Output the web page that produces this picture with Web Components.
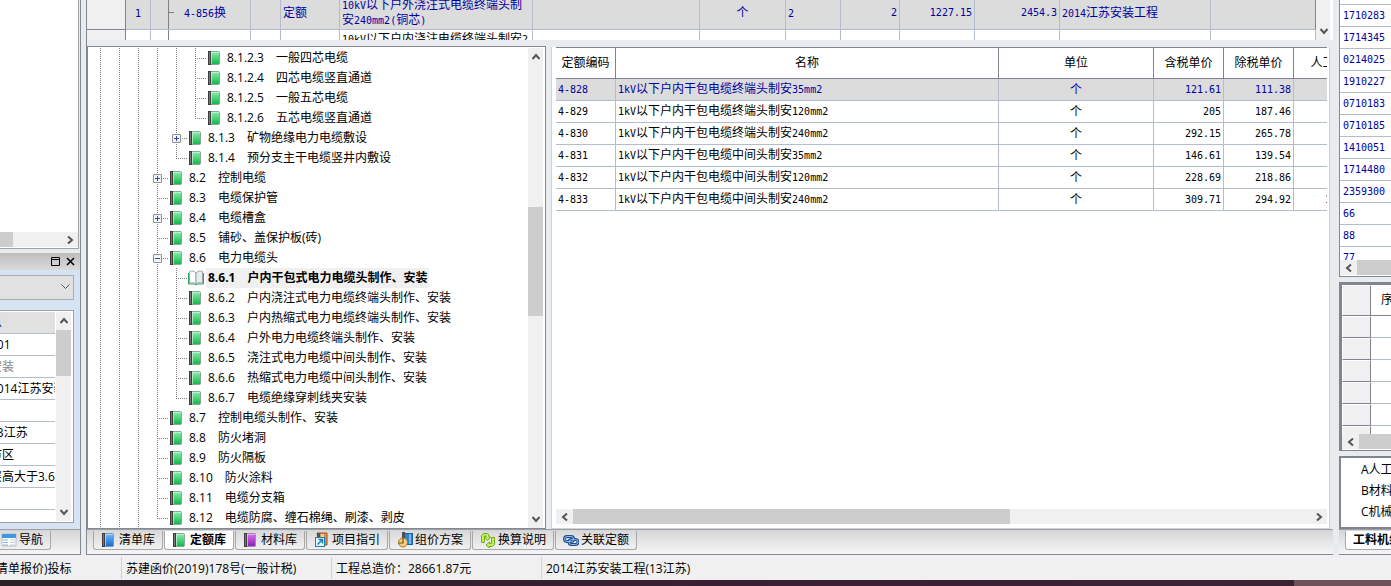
<!DOCTYPE html>
<html lang="zh-CN">
<head>
<meta charset="utf-8">
<title>工程造价</title>
<style>
html, body { margin: 0; height: 100%; }
body { overflow: hidden; background: #e8ecee; font: 12px/20px "Open Sans", "Noto Sans CJK SC", sans-serif; color: #000; }
</style>
</head>
<body>
<cost-app></cost-app>
<script>
const base = `*{box-sizing:border-box}button,select{font:inherit;color:inherit;border:0;background:none;padding:0;margin:0}`;
function define(name, html, setup) {
  const t = document.createElement('template');
  t.innerHTML = html.replace('<style>', '<style>' + base);
  customElements.define(name, class extends HTMLElement {
    constructor() { super(); this.attachShadow({ mode: 'open' }).append(t.content.cloneNode(true)); }
    connectedCallback() { if (setup && !this.ready) { this.ready = true; setup(this, this.shadowRoot); } }
  });
}
/* Latin runs of grid text are set in a half-width face beside the 12px ideographs */
const mix = s => s.replace(/[\x20-\x7e]+/g, m => `<span class="l">${m}</span>`);
const gridCss = `
:host{display:block;overflow:hidden;background:#fff;min-width:0}
table{border-collapse:separate;border-spacing:0;table-layout:fixed;width:100%;line-height:14px}
td,th{padding:0 2px;border-right:1px solid #b4bdce;border-bottom:1px solid #b4bdce;font-weight:400;overflow:hidden;white-space:nowrap;text-align:left}
.l,.n{font:10px/14px "DejaVu Sans Mono","Liberation Mono",monospace}
.n{text-align:right}.c{text-align:center}
.sel{background:#dcdcdc;color:#0000a0}
.g{background:#f0f0f0;border-color:#84828f}`;

/* ---- icons ---- */
const book = (a, b, c) => `<linearGradient id="g" x1="0" y1="0" x2="0" y2="1"><stop offset="0" stop-color="${a}"/><stop offset="1" stop-color="${b}"/></linearGradient>
<rect x="1.5" y="1.5" width="11" height="13" rx="1" fill="url(#g)" stroke="${c}"/><path d="M1 1h3v14H1z" fill="#3c3c3c"/><path d="M2 2h1v12H2z" fill="#777"/><path d="M4 2h1v12H4z" fill="#fff" opacity=".55"/><path d="M5 2h7v1H5z" fill="#fff" opacity=".4"/>`;
const icons = {
  green: book('#8cf0b0', '#12b548', '#8aa894'),
  blue: book('#74bdf4', '#1468cf', '#8298b0'),
  purple: book('#dd74f0', '#8c1db4', '#a08aa8'),
  open: `<path d="M1.500 1.500C4 .5 6.500 1 8 3v11C6 12.500 4 12.500 1.500 13z" fill="#fff" stroke="#9ba7a7"/><path d="M14.500 1.500C12 .5 9.500 1 8 3v11c2-1.500 4-1.500 6.500-1z" fill="#e3eeee" stroke="#9ba7a7"/><path d="M.5 3v11h6l1.500 1 1.500-1h6V3" fill="none" stroke="#2ea566"/>`,
  guide: `<path d="M3 1h10v12H5z" fill="#e58b45" stroke="#9c5220"/><path d="M3 1h3v6H3z" fill="#555"/><path d="M7 2h3v11H7z" fill="#f9d3a6"/><rect x="1.500" y="5.500" width="9" height="9" fill="#e8f7fd" stroke="#1583b8"/><path d="M3.500 12.500L8 8M4.500 7.500h4v4" fill="none" stroke="#1583b8" stroke-width="1.500"/>`,
  plan: `<rect x="7.500" y="1.500" width="8" height="11" fill="#2b83d6" stroke="#1c5da3"/><path d="M12 2h2v10h-2z" fill="#77b9ee"/><path d="M5 0h3v12H5z" fill="#4b4f55"/><circle cx="6" cy="10.500" r="4.500" fill="#f5cf85" stroke="#a9731f"/><path d="M6 5.500V11H1.500" fill="none" stroke="#7a5315" stroke-width="1.200"/>`,
  swap: `<g fill="#c5ec62" stroke="#6fae16"><path d="M1.500 10.500v-7l2-2h4l1.500 1.500V5h1.500L7.500 8.500 4.500 5H6V4H4.500v6.500z"/><path d="M14.500 5.500v7l-2 2H9.500V16L6 13l3.500-3v1.500h2v-6z"/></g>`,
  link: `<g fill="none" stroke="#1f4f93" stroke-width="3"><rect x="1.500" y="4.500" width="9" height="5" rx="2.500"/><rect x="6" y="7.500" width="9" height="5" rx="2.500"/></g><g fill="none" stroke="#8db9ea"><rect x="1.500" y="4.500" width="9" height="5" rx="2.500"/><rect x="6" y="7.500" width="9" height="5" rx="2.500"/></g>`,
  nav: `<path d="M1 2h14v12H1z" fill="#fff" stroke="#b7bcc2"/><path d="M1 2h14v4H1z" fill="#3f97de"/><path d="M2 8h5M2 10.500h5M2 13h5" stroke="#84b6e4"/><path d="M9 8h5M9 10.500h5M9 13h5" stroke="#c8ccd0"/>`
};
define('app-icon', `<style>:host{display:block;width:16px;height:16px;flex:none}svg{display:block}</style><svg width="16" height="16" viewBox="0 0 16 16" aria-hidden="true"></svg>`,
  (el, r) => { r.querySelector('svg').innerHTML = icons[el.getAttribute('name')]; });

/* ---- scroll bar: parts = "before,thumb,after" shares of the track ---- */
define('scroll-bar', `<style>
:host{display:flex;flex:none;background:#f0f0f0;height:15px}
:host([vertical]){flex-direction:column;width:15px;height:auto}
button{flex:none;width:17px;height:15px;display:grid;place-items:center}
:host([vertical]) button{width:15px;height:18px}
:host([vertical]) svg{transform:rotate(90deg)}
i{flex:1 1 0;min-width:0;min-height:0}.t{background:#cdcdcd}
:host([flat]) .s,:host([open]) .e{display:none}
</style><button class="s" aria-label="后退"><svg width="8" height="8"><path d="M6 .5L2 4l4 3.500" fill="none" stroke="#555" stroke-width="2"/></svg></button><i></i><i class="t"></i><i></i><button class="e" aria-label="前进"><svg width="8" height="8"><path d="M2 .5L6 4 2 7.500" fill="none" stroke="#555" stroke-width="2"/></svg></button>`,
  (el, r) => { const p = el.getAttribute('parts').split(','); r.querySelectorAll('i').forEach((x, k) => x.style.flexGrow = p[k]); });

/* ---- tabs ---- */
define('tab-strip', `<style>
:host{display:flex;flex:none;height:25px;border-top:1px solid #9b9ea5;background:linear-gradient(#d5d5d5,#f6f6f6);padding:1px 6px 0;overflow:hidden}
</style><slot></slot>`);
define('tab-item', `<style>
:host{display:block;flex:none;margin-right:1px}
button{display:flex;align-items:center;gap:2px;height:19px;padding:0 7px;border:1px solid #a9a9ab;border-top:0;border-radius:0 0 3px 3px;background:linear-gradient(#d9d9d9,#f1f1f1);line-height:18px;white-space:nowrap}
:host([active]) button{background:#fff;font-weight:700}
</style><button role="tab"><slot name="icon"></slot><slot></slot></button>`);

/* ---- tree ---- */
define('tree-row', `<style>
:host{display:flex;height:20px;white-space:nowrap}
.v{flex:none;width:19px;position:relative}
.v::before{content:"";position:absolute;left:9px;top:0;bottom:0;width:1px;background:repeating-linear-gradient(#808080 0 1px,#fff 1px 2px)}
.end::before{bottom:10px}
.j::after{content:"";position:absolute;left:9px;top:10px;width:11px;height:1px;background:repeating-linear-gradient(90deg,#808080 0 1px,#fff 1px 2px)}
button{position:absolute;z-index:1;left:5px;top:6px;width:9px;height:9px;border:1px solid #919191;border-radius:1px;background:#f5f6f8;display:block}
svg{display:block}
app-icon{margin:2px 2px 0}
.t{display:flex;gap:12px;padding:0 2px}
:host([current]) .t{background:#f0f0f0;font-weight:700}
</style>`, (el, r) => {
  const [lv, code, name, flag] = el.data;
  let h = '';
  for (let k = 0; k < lv; k++) h += '<span class="v"></span>';
  const box = /[+-]/.test(flag || '') ? `<button aria-label="${flag === '+' ? '展开' : '折叠'}"><svg width="7" height="7"><path d="M1 3.500h5${flag === '+' ? 'M3.500 1v5' : ''}" stroke="#2a4aa0"/></svg></button>` : '';
  h += `<span class="v j ${flag === 'end' ? 'end' : ''}">${box}</span>`;
  h += `<app-icon name="${flag === 'cur' ? 'open' : 'green'}"></app-icon><span class="t"><span>${code}</span><span>${name}</span></span>`;
  if (flag === 'cur') el.setAttribute('current', '');
  el.setAttribute('role', 'treeitem');
  r.append(document.createRange().createContextualFragment(h));
});
const nodes = [
  [5, '8.1.2.3', '一般四芯电缆'], [5, '8.1.2.4', '四芯电缆竖直通道'], [5, '8.1.2.5', '一般五芯电缆'], [5, '8.1.2.6', '五芯电缆竖直通道', 'end'],
  [4, '8.1.3', '矿物绝缘电力电缆敷设', '+'], [4, '8.1.4', '预分支主干电缆竖井内敷设', 'end'],
  [3, '8.2', '控制电缆', '+'], [3, '8.3', '电缆保护管'], [3, '8.4', '电缆槽盒', '+'], [3, '8.5', '铺砂、盖保护板(砖)'], [3, '8.6', '电力电缆头', '-'],
  [4, '8.6.1', '户内干包式电力电缆头制作、安装', 'cur'], [4, '8.6.2', '户内浇注式电力电缆终端头制作、安装'], [4, '8.6.3', '户内热缩式电力电缆终端头制作、安装'],
  [4, '8.6.4', '户外电力电缆终端头制作、安装'], [4, '8.6.5', '浇注式电力电缆中间头制作、安装'], [4, '8.6.6', '热缩式电力电缆中间头制作、安装'], [4, '8.6.7', '电缆绝缘穿刺线夹安装', 'end'],
  [3, '8.7', '控制电缆头制作、安装'], [3, '8.8', '防火堵洞'], [3, '8.9', '防火隔板'], [3, '8.10', '防火涂料'], [3, '8.11', '电缆分支箱'], [3, '8.12', '电缆防腐、缠石棉绳、刷漆、剥皮', 'end']];
define('quota-tree', `<style>
:host{display:flex;flex:none;width:459px;border:1px solid #848892;background:#fff;padding:1px 2px 0 0;overflow:hidden}
.rows{flex:1;min-width:0;padding-left:3px}
</style><div class="rows" role="tree"></div><scroll-bar vertical parts="142,109,195"></scroll-bar>`, (el, r) => {
  const box = r.querySelector('.rows');
  nodes.forEach(n => { const e = document.createElement('tree-row'); e.data = n; box.append(e); });
});

/* ---- bill lines ---- */
define('bill-grid', `<style>${gridCss}
:host{display:flex;flex:none;height:40px;padding-right:3px}
.clip{flex:1;min-width:0;height:40px;overflow:hidden;display:flex;align-items:flex-start}
table{margin-top:-5px}
tr{height:35px}
.sel td{padding-top:2px}
.w{white-space:normal}
.tr{padding-left:33px;background:linear-gradient(#808080,#808080) 17px 0/1px 100% no-repeat}
.tick{background:linear-gradient(#808080,#808080) 17px 0/1px 100% no-repeat,linear-gradient(#808080,#808080) 17px 17px/6px 1px no-repeat}
.top{vertical-align:top;padding-top:2px;white-space:nowrap}
.last{border-right-color:#84828f}
scroll-bar{width:14px}
</style><div class="clip"><table><colgroup><col style="width:39px"><col style="width:25px"><col style="width:100px"><col style="width:30px"><col style="width:59px"><col style="width:193px"><col><col style="width:86px"><col style="width:55px"><col style="width:59px"><col style="width:75px"><col style="width:85px"><col style="width:151px"><col style="width:105px"></colgroup><tbody></tbody></table></div><scroll-bar vertical flat parts="1,0,0"></scroll-bar>`, (el, r) => {
  r.querySelector('tbody').innerHTML = `<tr class="sel"><td class="g"></td><td class="c">${mix('1')}</td><td class="tr tick">${mix('4-856换')}</td><td></td><td>定额</td><td class="w">${mix('10kV以下户外浇注式电缆终端头制安240mm2(铜芯)')}</td><td></td><td class="c">个</td><td>${mix('2')}</td><td class="n">2</td><td class="n">1227.15</td><td class="n">2454.3</td><td>${mix('2014江苏安装工程')}</td><td class="last"></td></tr>
<tr><td class="g"></td><td></td><td class="tr"></td><td></td><td></td><td class="top">${mix('10kV以下户内浇注电缆终端头制安2')}</td>${'<td></td>'.repeat(8)}</tr>`;
});

/* ---- quota lines ---- */
define('quota-grid', `<style>${gridCss}
:host{display:flex;flex:1;flex-direction:column;border:1px solid #cfd2d6;border-top:0;padding:0 2px 4px 4px}
.clip{flex:1;min-height:0;overflow:hidden}
table{width:calc(100% + 37px)}
th{height:32px;text-align:center;border-color:#84828f;border-top:1px solid #84828f}
td{height:22px}
</style><div class="clip"><table><colgroup><col style="width:60px"><col><col style="width:155px"><col style="width:70px"><col style="width:70px"><col style="width:70px"></colgroup><thead><tr><th>定额编码</th><th>名称</th><th>单位</th><th>含税单价</th><th>除税单价</th><th>人工费</th></tr></thead><tbody></tbody></table></div><scroll-bar parts="0,437,300"></scroll-bar>`, (el, r) => {
  const rows = [['4-828', '终端头制安35', '121.61', '111.38'], ['4-829', '终端头制安120', '205', '187.46'], ['4-830', '终端头制安240', '292.15', '265.78'], ['4-831', '中间头制安35', '146.61', '139.54'], ['4-832', '中间头制安120', '228.69', '218.86'], ['4-833', '中间头制安240', '309.71', '294.92', '103.74']];
  r.querySelector('tbody').innerHTML = rows.map((x, k) => `<tr class="${k ? '' : 'sel'}"><td>${mix(x[0])}</td><td>${mix('1kV以下户内干包电缆' + x[1] + 'mm2')}</td><td class="c">个</td><td class="n">${x[2]}</td><td class="n">${x[3]}</td><td class="n">${x[4] || ''}</td></tr>`).join('');
});

/* ---- left column ---- */
define('nav-side', `<style>
:host{display:flex;flex-direction:column;flex:none;width:81px;border-right:1px solid #848892;border-bottom:1px solid #848892;background:#e8ecee;overflow:hidden}
.a{flex:none;height:249px;display:flex;flex-direction:column;justify-content:flex-end;background:#fff;border:solid #a0a3a8;border-width:0 1px 1px 0;margin-right:1px;padding-bottom:1px}
header{flex:none;height:17px;margin-top:4px;background:linear-gradient(#bdbdbd,#dadada);display:flex;justify-content:flex-end;align-items:center;gap:4px;padding-right:4px}
header button{width:11px;height:11px}svg{display:block}
.b{flex:1;min-height:0;background:#d5e3f3;display:flex;flex-direction:column;padding:5px 6px 6px 0;gap:10px}
.combo{flex:none;height:25px;position:relative}
select{appearance:none;width:100%;height:25px;background:#e1e1e1;border:1px solid #adadad;border-left:0}
.combo svg{position:absolute;right:4px;top:9px;pointer-events:none}
.p{flex:1;min-height:0;display:flex;background:#fff;border:1px solid #a0a0a0;border-left:0;padding:1px 2px 1px 0}
.q{flex:1;min-width:0;overflow:hidden;margin-right:1px}
table{border-collapse:separate;border-spacing:0;table-layout:fixed;width:calc(100% + 10px);margin-left:-10px}
td{height:22px;border-bottom:1px solid #b4bdce;white-space:nowrap;overflow:hidden;padding:0;line-height:20px}
.h td{background:#e1e1e1;color:#0a3b8c}.d td{color:#888}
tab-strip{padding-left:0}tab-item{margin-left:-7px}
</style><div class="a"><scroll-bar flat parts="13,0,48"></scroll-bar></div>
<header><button aria-label="最大化"><svg width="11" height="11"><path d="M1.500 1.500h8v8h-8zM1 3.500h9" fill="none" stroke="#000"/></svg></button><button aria-label="关闭"><svg width="11" height="11"><path d="M2 2l7 7M9 2L2 9" stroke="#000" stroke-width="1.500"/></svg></button></header>
<div class="b"><div class="combo"><select aria-label="选择"><option></option></select><svg width="9" height="6"><path d="M.5.5l4 4 4-4" fill="none" stroke="#555"/></svg></div>
<div class="p"><div class="q"><table><tr class="h"><td>息</td></tr><tr><td>001</td></tr><tr class="d"><td>安装</td></tr><tr><td>2014江苏安装</td></tr><tr><td></td></tr><tr><td>13江苏</td></tr><tr><td>市区</td></tr><tr><td>层高大于3.6米</td></tr><tr><td></td></tr></table></div><scroll-bar vertical parts="0,47,128"></scroll-bar></div></div>
<tab-strip><tab-item><app-icon slot="icon" name="nav"></app-icon>导航</tab-item></tab-strip>`, (el, r) => {
  r.querySelector('.a scroll-bar').shadowRoot.querySelector('i').className = 't';
});

/* ---- right column ---- */
define('list-side', `<style>${gridCss}
:host{display:flex;flex-direction:column;flex:none;width:52px;background:#e8ecee;border-bottom:1px solid #848892;overflow:hidden}
.a{flex:none;height:277px;border:solid #848892;border-width:0 0 1px 1px;background:#fff;display:flex;flex-direction:column;padding-bottom:1px}
.k{flex:1;min-height:0;overflow:hidden}
.a td{height:22px;color:#0000a0}
.a table{margin-top:-17px}
.a .n{text-align:left;padding-left:3px;border-right:0}
.b{flex:none;height:169px;margin-top:5px;border:solid #808590;border-width:3px 0 1px 3px;background:#fff;display:flex;flex-direction:column;padding-bottom:1px}
.b table{width:100px}.b td{height:22px}.b th{height:31px;border-color:#84828f;text-align:left;padding-left:10px}.b .g{border-left:1px solid #fff;border-top:1px solid #fff}
ul{flex:1;margin:5px 0 0;padding:1px 0 0 20px;list-style:none;background:#fff;border:2px solid #808590;border-right:0;line-height:21px;white-space:nowrap}
</style><div class="a"><div class="k"><table><tbody class="codes"></tbody></table></div><scroll-bar open parts="0,1,0"></scroll-bar></div>
<div class="b"><div class="k"><table><colgroup><col style="width:29px"><col></colgroup><thead><tr><th class="g"></th><th>序号</th></tr></thead><tbody class="e"></tbody></table></div><scroll-bar open parts="0,1,0"></scroll-bar></div>
<ul><li>A人工</li><li>B材料</li><li>C机械</li></ul>
<tab-strip><tab-item active>工料机组</tab-item></tab-strip>`, (el, r) => {
  r.querySelector('.codes').innerHTML = ['', '1710283', '1714345', '0214025', '1910227', '0710183', '0710185', '1410051', '1714480', '2359300', '66', '88', '77'].map(c => `<tr><td class="n">${c}</td></tr>`).join('');
  r.querySelector('.e').innerHTML = '<tr><td class="g"></td><td></td></tr>'.repeat(6);
});

define('status-bar', `<style>
:host{display:flex;flex:none;height:25px;background:#f0f0f0;padding-top:2px;white-space:nowrap;overflow:hidden}
span{flex:none;width:210px;border-left:1px solid #d2d2d2;padding-left:4px;line-height:24px;height:22px}
.f{width:125px;margin-left:-4px;padding:0;border:0}
span:last-child{flex:1}
</style><span class="f">清单报价)投标</span><span>苏建函价(2019)178号(一般计税)</span><span>工程总造价：28661.87元</span><span>2014江苏安装工程(13江苏)</span>`);

define('cost-app', `<style>
:host{display:flex;flex-direction:column;height:100vh}
main{flex:1;min-height:0;display:flex}
.mid{flex:1;min-width:0;margin:0 6px 0 5px;border:solid #848892;border-width:0 0 1px 1px;display:flex;flex-direction:column}
.work{flex:1;min-height:0;display:flex;gap:5px;margin-top:6px;padding-right:3px}
quota-grid{margin-top:1px}
footer{flex:none;height:6px;background:linear-gradient(90deg,#2a2226,#3c1f35 60%,#3a2233 93%,#6d5058 93%)}
</style><main><nav-side></nav-side><section class="mid"><bill-grid></bill-grid><div class="work"><quota-tree></quota-tree><quota-grid></quota-grid></div>
<tab-strip role="tablist"><tab-item><app-icon slot="icon" name="blue"></app-icon>清单库</tab-item><tab-item active><app-icon slot="icon" name="green"></app-icon>定额库</tab-item><tab-item><app-icon slot="icon" name="purple"></app-icon>材料库</tab-item><tab-item><app-icon slot="icon" name="guide"></app-icon>项目指引</tab-item><tab-item><app-icon slot="icon" name="plan"></app-icon>组价方案</tab-item><tab-item><app-icon slot="icon" name="swap"></app-icon>换算说明</tab-item><tab-item><app-icon slot="icon" name="link"></app-icon>关联定额</tab-item></tab-strip></section><list-side></list-side></main><status-bar></status-bar><footer></footer>`);
</script>
</body>
</html>
